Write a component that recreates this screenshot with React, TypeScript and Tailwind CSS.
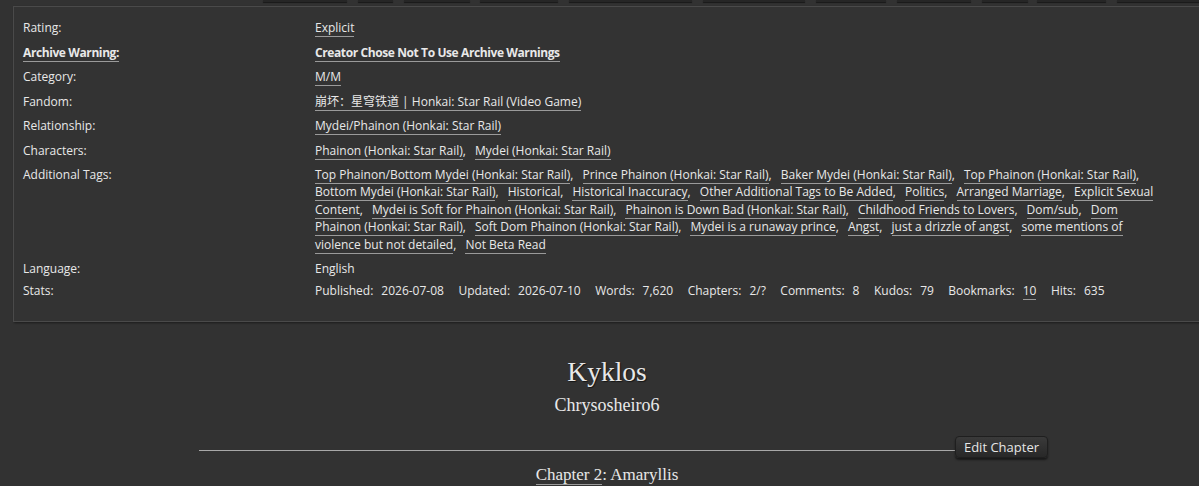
import React from "react";

const tags = [
  "Top Phainon/Bottom Mydei (Honkai: Star Rail)",
  "Prince Phainon (Honkai: Star Rail)",
  "Baker Mydei (Honkai: Star Rail)",
  "Top Phainon (Honkai: Star Rail)",
  "Bottom Mydei (Honkai: Star Rail)",
  "Historical",
  "Historical Inaccuracy",
  "Other Additional Tags to Be Added",
  "Politics",
  "Arranged Marriage",
  "Explicit Sexual Content",
  "Mydei is Soft for Phainon (Honkai: Star Rail)",
  "Phainon is Down Bad (Honkai: Star Rail)",
  "Childhood Friends to Lovers",
  "Dom/sub",
  "Dom Phainon (Honkai: Star Rail)",
  "Soft Dom Phainon (Honkai: Star Rail)",
  "Mydei is a runaway prince",
  "Angst",
  "just a drizzle of angst",
  "some mentions of violence but not detailed",
  "Not Beta Read",
];

const stats: [string, string][] = [
  ["Published", "2026-07-08"],
  ["Updated", "2026-07-10"],
  ["Words", "7,620"],
  ["Chapters", "2/?"],
  ["Comments", "8"],
  ["Kudos", "79"],
  ["Bookmarks", "10"],
  ["Hits", "635"],
];

// nav buttons peeking in from above
const navButtons = [
  [263, 84], [358, 35], [404, 66], [480, 78], [569, 123], [703, 102],
  [816, 70], [897, 74], [982, 46], [1037, 69], [1117, 100],
];

const link = "border-b border-[#9a9a9a]";

function TagList({ items }: { items: string[] }) {
  return (
    <>
      {items.map((t, i) => (
        <React.Fragment key={t}>
          <a className={link}>{t}</a>
          {i < items.length - 1 && <span className="mr-[6px]">,</span>}{" "}
        </React.Fragment>
      ))}
    </>
  );
}

export default function App() {
  return (
    <div className="w-[1199px] h-[486px] overflow-hidden bg-[#323232] text-[#e8e8e8] font-['Open_Sans','Noto_Sans_CJK_SC',sans-serif] text-[12px]">
      <div className="relative h-[2px]">
        {navButtons.map(([x, w]) => (
          <div
            key={x}
            className="absolute top-0 h-[2px] bg-[#262626] shadow-[0_1px_1px_rgba(0,0,0,0.5)]"
            style={{ left: x, width: w }}
          />
        ))}
      </div>

      <div className="mt-[4px] ml-[13px] w-[1188px] border border-[#4a4a4a] bg-[#333333] shadow-[1px_1px_2px_rgba(0,0,0,0.45)]">
        <dl className="grid grid-cols-[292px_852px] gap-y-[7.1px] pl-[9px] pt-[12px] pb-[22px] leading-[17.4px]">
          <dt>Rating:</dt>
          <dd><a className={link}>Explicit</a></dd>

          <dt className="font-bold tracking-[-0.4px]"><a className={link}>Archive Warning:</a></dt>
          <dd className="font-bold tracking-[-0.4px]"><a className={link}>Creator Chose Not To Use Archive Warnings</a></dd>

          <dt>Category:</dt>
          <dd><a className={link}>M/M</a></dd>

          <dt>Fandom:</dt>
          <dd><a className={link}>崩坏：星穹铁道 | Honkai: Star Rail (Video Game)</a></dd>

          <dt>Relationship:</dt>
          <dd><a className={link}>Mydei/Phainon (Honkai: Star Rail)</a></dd>

          <dt>Characters:</dt>
          <dd><TagList items={["Phainon (Honkai: Star Rail)", "Mydei (Honkai: Star Rail)"]} /></dd>

          <dt>Additional Tags:</dt>
          <dd><TagList items={tags} /></dd>

          <dt>Language:</dt>
          <dd>English</dd>

          <dt className="-mt-[3px]">Stats:</dt>
          <dd className="-mt-[3px] flex">
            {stats.map(([k, v]) => (
              <span key={k} className="mr-[14.5px]">
                {k}:<span className="ml-[8px]">{k === "Bookmarks" ? <a className={link}>{v}</a> : v}</span>
              </span>
            ))}
          </dd>
        </dl>
      </div>

      <div className="ml-[13px] w-[1188px] font-['Liberation_Serif',serif] text-center">
        <h2 className="mt-[33px] text-[27.5px] leading-[34px] [text-shadow:1px_1px_1px_rgba(0,0,0,0.6)]">Kyklos</h2>
        <h3 className="mt-[5px] text-[18px] leading-[22px]">Chrysosheiro6</h3>

        <div className="mt-[20px] ml-[186px] w-[849px] flex items-start">
          <div className="flex-1 mt-[14px] h-px bg-[#a8a8a8]" />
          <button className="h-[22px] px-[8px] rounded-[4px] border border-[#1f1f1f] bg-gradient-to-b from-[#3a3a3a] to-[#282828] shadow-[0_2px_2px_rgba(0,0,0,0.5)] font-['Open_Sans',sans-serif] text-[13px] leading-[20px] text-[#e6e6e6]">
            Edit Chapter
          </button>
        </div>

        <h3 className="mt-[6px] text-[17px] leading-[22px]">
          <a className={link}>Chapter 2</a>: Amaryllis
        </h3>
      </div>
    </div>
  );
}
